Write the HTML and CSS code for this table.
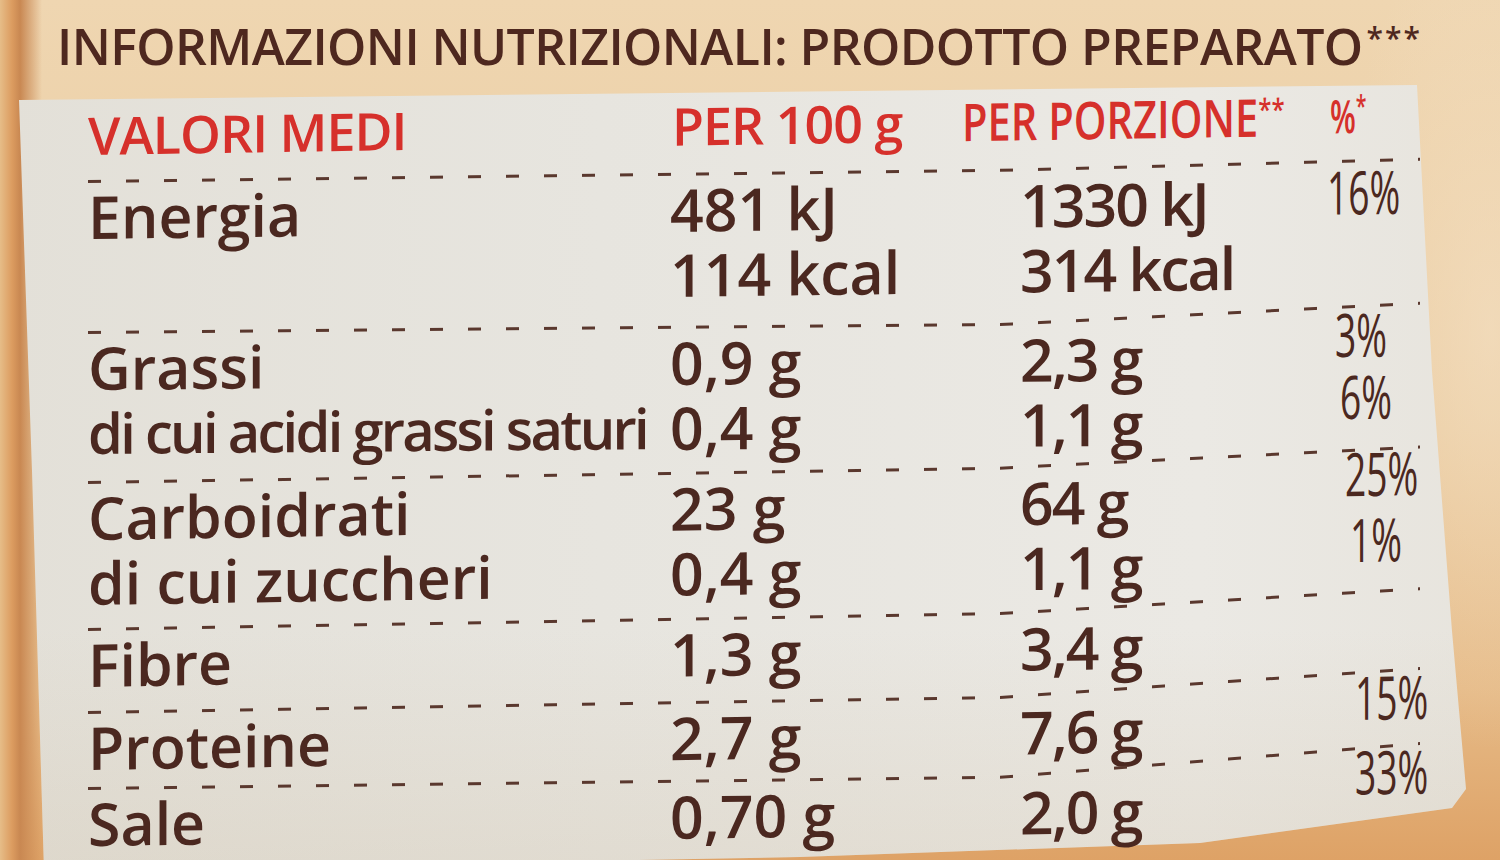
FILE: index.html
```html
<!DOCTYPE html>
<html lang="it">
<head>
<meta charset="utf-8">
<title>Informazioni nutrizionali</title>
<link rel="stylesheet" href="styles.css">
</head>
<body>
<div class="label">
  <h1 class="title">INFORMAZIONI NUTRIZIONALI: PRODOTTO PREPARATO<span class="stars">***</span></h1>
  <div class="panel">
    <div class="head">
      <span class="h-name">VALORI MEDI</span>
      <span class="h-100">PER 100 g</span>
      <span class="h-por">PER PORZIONE<span class="st">**</span></span>
      <span class="h-pct">%<span class="st">*</span></span>
    </div>

    <div class="group g1">
      <div class="name">Energia</div><div class="v1">481 kJ</div><div class="v2">1330 kJ</div>
      <div class="pct"><span class="o0">16%</span></div>
      <div class="name"></div><div class="v1">114 kcal</div><div class="v2">314 kcal</div>
    </div>

    <div class="group g2">
      <div class="name">Grassi</div><div class="v1">0,9 g</div><div class="v2">2,3 g</div>
      <div class="pct"><span class="o5">3%</span><span class="o10">6%</span></div>
      <div class="name sub">di cui acidi grassi saturi</div><div class="v1">0,4 g</div><div class="v2">1,1 g</div>
    </div>

    <div class="group g3">
      <div class="name">Carboidrati</div><div class="v1">23 g</div><div class="v2">64 g</div>
      <div class="pct"><span class="o15">25%</span><span class="o20">1%</span></div>
      <div class="name">di cui zuccheri</div><div class="v1">0,4 g</div><div class="v2">1,1 g</div>
    </div>

    <div class="group g4">
      <div class="name">Fibre</div><div class="v1">1,3 g</div><div class="v2">3,4 g</div>
    </div>

    <div class="group g5">
      <div class="name">Proteine</div><div class="v1">2,7 g</div><div class="v2">7,6 g</div>
      <div class="pct"><span class="o25">15%</span></div>
    </div>

    <div class="group g6">
      <div class="name">Sale</div><div class="v1">0,70 g</div><div class="v2">2,0 g</div>
      <div class="pct"><span class="o25">33%</span></div>
    </div>
  </div>
</div>
</body>
</html>
```
FILE: styles.css
```css
* { box-sizing: border-box; }
html, body { margin: 0; padding: 0; }
body {
  width: 1500px;
  height: 860px;
  overflow: hidden;
  font-family: "Open Sans", "Noto Sans", "DejaVu Sans", sans-serif;
}

.label {
  width: 1500px;
  height: 860px;
  overflow: hidden;
  display: flex;
  flex-direction: column;
  color: #4b2820;
  background:
    linear-gradient(90deg, #e6bd88 0px, #dc9c60 12px, #c98852 20px, rgba(224,176,124,0) 42px),
    radial-gradient(ellipse 160px 420px at 1490px 330px, rgba(244,224,196,.65), rgba(244,224,196,0)),
    linear-gradient(180deg, #efd6b1 0%, #eacb9f 50%, #e6bb88 80%, #dea266 100%);
}

.title {
  flex: none;
  height: 71px;
  margin: 0;
  padding: 18px 0 0 57px;
  font-size: 50px;
  line-height: 56px;
  font-weight: 600;
  letter-spacing: -0.6px;
  color: #4e281f;
  white-space: nowrap;
}
.title .stars {
  font-size: 30px;
  line-height: 0;
  vertical-align: 16px;
  letter-spacing: 2px;
  margin-left: 4px;
}

.panel {
  position: relative;
  isolation: isolate;
  flex: 1;
  padding: 34px 80px 0 88px;
}
.panel::before {
  content: "";
  position: absolute;
  inset: 0;
  z-index: -1;
  background:
    linear-gradient(180deg, rgba(255,255,255,0) 70%, rgba(205,190,165,.25) 100%),
    linear-gradient(90deg, #e3e0d8 0%, #e7e5df 40%, #ebe9e4 80%, #e7e4dd 100%);
  clip-path: polygon(19px 29px, 1417px 14px, 1432px 300px, 1452px 560px, 1466px 718px, 1452px 737px, 1200px 772px, 800px 786px, 44px 800px, 32px 400px);
}

.head {
  display: grid;
  grid-template-columns: 584px 290px 368px 1fr;
  height: 60px;
  margin-bottom: 15px;
  font-size: 52px;
  line-height: 60px;
  font-weight: 600;
  color: #d6302b;
  white-space: nowrap;
  transform: skewY(-0.9deg);
  transform-origin: 0 0;
}
.h-name, .h-100 { letter-spacing: -1px; }
.h-por, .h-pct {
  display: inline-block;
  width: max-content;
  transform-origin: 0 50%;
}
.h-por { transform: scaleX(.8); }
.h-pct { transform: scaleX(.65); font-size: 46px; }
.head .st {
  font-size: 30px;
  line-height: 0;
  vertical-align: 16px;
}

.group {
  position: relative;
  display: grid;
  grid-template-columns: 582px 350px 310px 1fr;
  grid-auto-rows: 65px;
  padding: 4px 0 14px;
  font-size: 59px;
  line-height: 65px;
  font-weight: 600;
  white-space: nowrap;
  transform-origin: 0 0;
  transform: skewY(calc(-1 * var(--s)));
}
.group::before,
.group::after {
  content: "";
  position: absolute;
  top: 0;
  height: 3px;
  background: repeating-linear-gradient(90deg, #5a382e 0 13px, rgba(90,56,46,0) 13px 38px);
  transform-origin: 0 0;
}
.group::before { left: 0; width: 912px; }
.group::after { left: 912px; right: 0; transform: skewY(calc(-1 * var(--e))); }

.g1 { --s: 0.7deg; --e: 0.8deg; padding-bottom: 17px; }
.g2 { --s: 0.5deg; --e: 2.4deg; padding-bottom: 16px; }
.g3 { --s: 0.9deg; --e: 2deg; padding-bottom: 13px; }
.g4 { --s: 1deg; --e: 2.4deg; }
.g5 { --s: 0.95deg; --e: 3deg; padding-bottom: 7px; }
.g6 { --s: 0.7deg; --e: 3.9deg; }

.sub { font-size: 56px; letter-spacing: -2.7px; }
.v2 { letter-spacing: -2px; }

.pct {
  grid-column: 4;
  grid-row: 1;
  align-self: start;
  font-size: 60px;
  line-height: 62px;
  font-weight: 500;
}
.g1 .pct { margin-top: -8px; }
.g2 .pct { margin-top: -21px; }
.g3 .pct { margin-top: -25px; line-height: 66px; }
.g5 .pct { margin-top: -28px; }
.g6 .pct { margin-top: -35px; }
.pct span {
  display: block;
  width: max-content;
  transform: scaleX(.62);
  transform-origin: 0 0;
}
.o0 { margin-left: -3px; }
.o5 { margin-left: 5px; }
.o10 { margin-left: 10px; }
.o15 { margin-left: 15px; }
.o20 { margin-left: 20px; }
.o25 { margin-left: 25px; }
```
